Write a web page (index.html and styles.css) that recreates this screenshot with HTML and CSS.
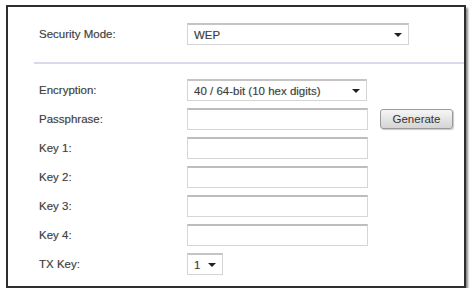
FILE: index.html
```html
<!DOCTYPE html>
<html lang="en">
<head>
  <meta charset="UTF-8" />
  <title>Wireless Security</title>
  <link rel="stylesheet" href="styles.css">
</head>
<body>
  <div class="frame">
    <div class="row top-row">
      <span class="label">Security Mode:</span>
      <div class="select mode-select"><span>WEP</span><span class="arrow"></span></div>
    </div>

    <div class="divider"></div>

    <div class="fields">
      <span class="label">Encryption:</span>
      <div class="control">
        <div class="select enc-select"><span>40 / 64-bit (10 hex digits)</span><span class="arrow"></span></div>
      </div>

      <span class="label">Passphrase:</span>
      <div class="control">
        <input class="text-input" type="text">
        <button class="gen-btn">Generate</button>
      </div>

      <span class="label">Key 1:</span>
      <div class="control"><input class="text-input" type="text"></div>

      <span class="label">Key 2:</span>
      <div class="control"><input class="text-input" type="text"></div>

      <span class="label">Key 3:</span>
      <div class="control"><input class="text-input" type="text"></div>

      <span class="label">Key 4:</span>
      <div class="control"><input class="text-input" type="text"></div>

      <span class="label">TX Key:</span>
      <div class="control">
        <div class="select tx-select"><span>1</span><span class="arrow"></span></div>
      </div>
    </div>
  </div>
</body>
</html>
```

FILE: styles.css
```css
body {
  margin: 0;
  background: #fff;
  font-family: "Liberation Sans", Arial, sans-serif;
  font-size: 11.5px;
  color: #404040;
}
.frame {
  box-sizing: border-box;
  width: 460px;
  height: 283px;
  margin: 5px 0 0 6px;
  border: 2px solid #2e2e2e;
  box-shadow: 2px 3px 2px #8a8a8a;
  background: #fff;
  padding-top: 16px;
}
.row {
  display: flex;
  align-items: center;
}
.label {
  box-sizing: border-box;
  display: flex;
  align-items: center;
  padding-left: 31px;
  height: 22px;
  text-shadow: 0 0 1px rgba(0, 0, 0, 0.25);
}
.top-row .label {
  width: 179px;
}
.select {
  box-sizing: border-box;
  display: flex;
  align-items: center;
  justify-content: space-between;
  height: 22px;
  padding: 0 6px 0 6px;
  border: 1px solid #d4d4d4;
  border-top: 2px solid #c4c4c4;
  background: #fff;
  text-shadow: 0 0 1px rgba(0, 0, 0, 0.25);
}
.mode-select {
  width: 222px;
}
.enc-select {
  width: 180px;
}
.tx-select {
  width: 36px;
}
.arrow {
  width: 0;
  height: 0;
  border-left: 4px solid transparent;
  border-right: 4px solid transparent;
  border-top: 4px solid #222;
}
.divider {
  height: 2px;
  margin: 17px 0 15px 26px;
  background: #d8d9ea;
}
.fields {
  display: grid;
  grid-template-columns: 179px 1fr;
  row-gap: 7px;
}
.control {
  display: flex;
  align-items: center;
}
.text-input {
  box-sizing: border-box;
  width: 181px;
  height: 22px;
  margin: 0;
  border: 1px solid #d6d6d6;
  border-top: 2px solid #bdbdbd;
  background: #fff;
}
.gen-btn {
  box-sizing: border-box;
  width: 73px;
  height: 20px;
  margin-left: 12px;
  border: 1px solid #9a9a9a;
  border-radius: 3px;
  background: linear-gradient(#f6f6f6, #d4d4d4);
  box-shadow: 1px 1px 1px #c8c8c8;
  font-family: "Liberation Sans", Arial, sans-serif;
  font-size: 11.5px;
  color: #333;
}
```
